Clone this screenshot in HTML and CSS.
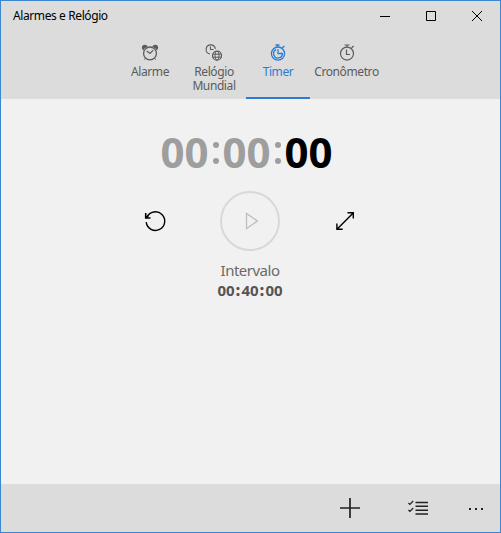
FILE: index.html
```html
<!DOCTYPE html>
<html lang="pt-BR">
<head>
<meta charset="utf-8">
<title>Alarmes e Relógio</title>
<link rel="stylesheet" href="styles.css">
</head>
<body>
<div class="window">
  <header class="titlebar">
    <h1 class="title">Alarmes e Relógio</h1>
    <div class="controls">
      <button class="control" aria-label="Minimizar"><svg width="10" height="10" viewBox="0 0 10 10"><path d="M0 5.5H10"/></svg></button>
      <button class="control" aria-label="Maximizar"><svg width="10" height="10" viewBox="0 0 10 10"><path d="M.5 .5H9.5V9.5H.5Z"/></svg></button>
      <button class="control" aria-label="Fechar"><svg width="10" height="10" viewBox="0 0 10 10"><path d="M0 0L10 10M10 0L0 10"/></svg></button>
    </div>
  </header>
  <nav class="tabs">
    <a class="tab">
      <svg width="18" height="18" viewBox="0 0 18 18"><circle class="fill" cx="3.8" cy="4.6" r="2.9"/><circle class="fill" cx="14.2" cy="4.6" r="2.9"/><circle class="face" cx="9" cy="10.4" r="7.2"/><circle cx="9" cy="10.4" r="6.4" stroke-width="1.3"/><path d="M5.7 8L9 10.5L12.3 7.2" stroke-width="1.2"/><path d="M4.4 15.2L3.3 16.6M13.6 15.2L14.7 16.6"/></svg>
      <span class="label">Alarme</span>
    </a>
    <a class="tab">
      <svg width="18" height="18" viewBox="0 0 18 18"><path d="M5 11A4.6 4.6 0 1 1 10.3 6M5.5 3.5V6.5H8.5" stroke-width="1.1"/><circle cx="12" cy="12.7" r="4.5" stroke-width="1.2"/><ellipse cx="12" cy="12.7" rx="2" ry="4.5"/><path d="M7.9 11.2H16.1M7.9 14.2H16.1"/></svg>
      <span class="label">Relógio<br>Mundial</span>
    </a>
    <a class="tab active">
      <svg width="18" height="18" viewBox="0 0 18 18"><circle cx="9" cy="10.6" r="6.6" stroke-width="1.3"/><path d="M6.5 2H10.5M8.5 2V4M13.2 5L15.3 3M9 6.3V10.5H13.4A4.4 4.4 0 1 1 7.2 6.6" stroke-width="1.3"/></svg>
      <span class="label">Timer</span>
    </a>
    <a class="tab wide">
      <svg width="18" height="18" viewBox="0 0 18 18"><circle cx="9" cy="10.6" r="6.5" stroke-width="1.2"/><path d="M6.5 2H11.5M9 2V4M13.5 5L15.6 3M8.5 6.5V11.5H12" stroke-width="1.2"/></svg>
      <span class="label">Cronômetro</span>
    </a>
  </nav>
  <main class="content">
    <div class="countdown">
      <span class="digits">00</span><span class="colon"><i></i><i></i></span><span class="digits">00</span><span class="colon"><i></i><i></i></span><span class="digits seconds">00</span>
    </div>
    <div class="actions">
      <button class="action" aria-label="Redefinir"><svg width="24" height="24" viewBox="0 0 24 24"><path d="M3.2 13.2A9.3 9.3 0 1 0 4 8.2" stroke-width="1.4"/><path d="M2.7 4V9H7.5M3 8.8L5.4 6.4" stroke-width="1.6"/></svg></button>
      <button class="play" aria-label="Iniciar"><svg width="14" height="18" viewBox="0 0 14 18"><path d="M1.5 1.5V16.5L12.5 9Z" stroke-width="1.3"/></svg></button>
      <button class="action" aria-label="Expandir"><svg width="24" height="24" viewBox="0 0 24 24"><path d="M4.2 20L20.2 4M14.5 3.7H20.3V9.5M3.9 14.5V20.3H9.7" stroke-width="1.4"/></svg></button>
    </div>
    <div class="name">Intervalo</div>
    <div class="total"><span>00</span><b>:</b><span>40</span><b>:</b><span>00</span></div>
  </main>
  <footer class="appbar">
    <button class="command" aria-label="Adicionar"><svg width="20" height="20" viewBox="0 0 20 20"><path d="M10 0V20M0 10H20" stroke-width="1.7"/></svg></button>
    <button class="command select" aria-label="Selecionar"><svg width="20" height="16" viewBox="0 0 20 16"><path d="M7.5 2.5H20M7.5 6.3H20M7.5 10.2H20M7.5 14H20" stroke-width="1.4"/><path d="M.4 3L1.9 4.4L5.2 1M.4 10L1.9 11.4L5.2 8" stroke-width="1.2"/></svg></button>
    <button class="command more" aria-label="Mais"><i></i><i></i><i></i></button>
  </footer>
</div>
</body>
</html>
```

FILE: styles.css
```css
* { box-sizing: border-box; }
body { margin: 0; font-family: "Noto Sans", "Open Sans", sans-serif; }
button { padding: 0; border: 0; background: none; color: inherit; font: inherit; }
svg { display: block; fill: none; stroke: currentColor; }
.window {
  display: flex;
  flex-direction: column;
  width: 501px;
  height: 533px;
  border: 1px solid #3c85cf;
  background: #f1f1f1;
  color: #000;
}
.titlebar {
  display: flex;
  justify-content: space-between;
  height: 30px;
  background: #dcdcdc;
}
.title {
  margin: 0;
  padding-left: 12px;
  font-size: 12px;
  font-weight: 400;
  line-height: 30px;
  letter-spacing: -0.4px;
}
.controls { display: flex; }
.control { display: flex; align-items: center; justify-content: center; width: 46px; height: 30px; }
.tabs {
  display: flex;
  justify-content: center;
  height: 68px;
  background: #dcdcdc;
  color: #5b5b5b;
}
.tab {
  display: flex;
  flex-direction: column;
  align-items: center;
  width: 64px;
  padding-top: 12px;
  border-bottom: 2px solid transparent;
}
.tab.wide { width: 73px; }
.tab.active { color: #2b7cd3; border-color: #2b7cd3; }
.tab .fill { fill: currentColor; stroke: none; }
.tab .face { fill: #dcdcdc; stroke: none; }
.label { margin-top: 4px; font-size: 12px; line-height: 14px; letter-spacing: -0.4px; text-align: center; white-space: nowrap; }
.content { flex: 1; display: flex; flex-direction: column; align-items: center; padding-right: 1px; }
.countdown {
  display: flex;
  justify-content: center;
  width: 100%;
  height: 50px;
  margin-top: 28px;
  padding-right: 7px;
  color: #9e9e9e;
}
.digits { width: 48px; font: 700 42px/50px "Open Sans", sans-serif; text-align: center; }
.digits.seconds { color: #000; }
.colon { display: flex; flex-direction: column; gap: 10px; align-items: center; width: 14px; padding-top: 15px; }
.colon i { width: 6px; height: 6px; border-radius: 50%; background: #9e9e9e; }
.actions { display: flex; align-items: center; gap: 53px; height: 60px; margin-top: 14px; }
.action { width: 24px; height: 24px; }
.play {
  display: flex;
  align-items: center;
  justify-content: center;
  width: 60px;
  height: 60px;
  padding-left: 3px;
  border: 2px solid #d8d8d8;
  border-radius: 50%;
  color: #bebebe;
}
.name { margin-top: 8px; font-size: 15px; line-height: 22px; color: #6a6a6a; letter-spacing: -0.5px; }
.total { display: flex; font: 700 15px/18px "Open Sans", sans-serif; color: #555; }
.total span { width: 18px; text-align: center; }
.total b { width: 6px; text-align: center; }
.appbar { display: flex; align-items: center; justify-content: flex-end; height: 48px; background: #dcdcdc; }
.command { display: flex; align-items: center; justify-content: center; width: 68px; height: 48px; color: #222; }
.command.more { width: 48px; gap: 4px; padding-top: 1px; }
.more i { width: 2px; height: 2px; background: #222; }
```
